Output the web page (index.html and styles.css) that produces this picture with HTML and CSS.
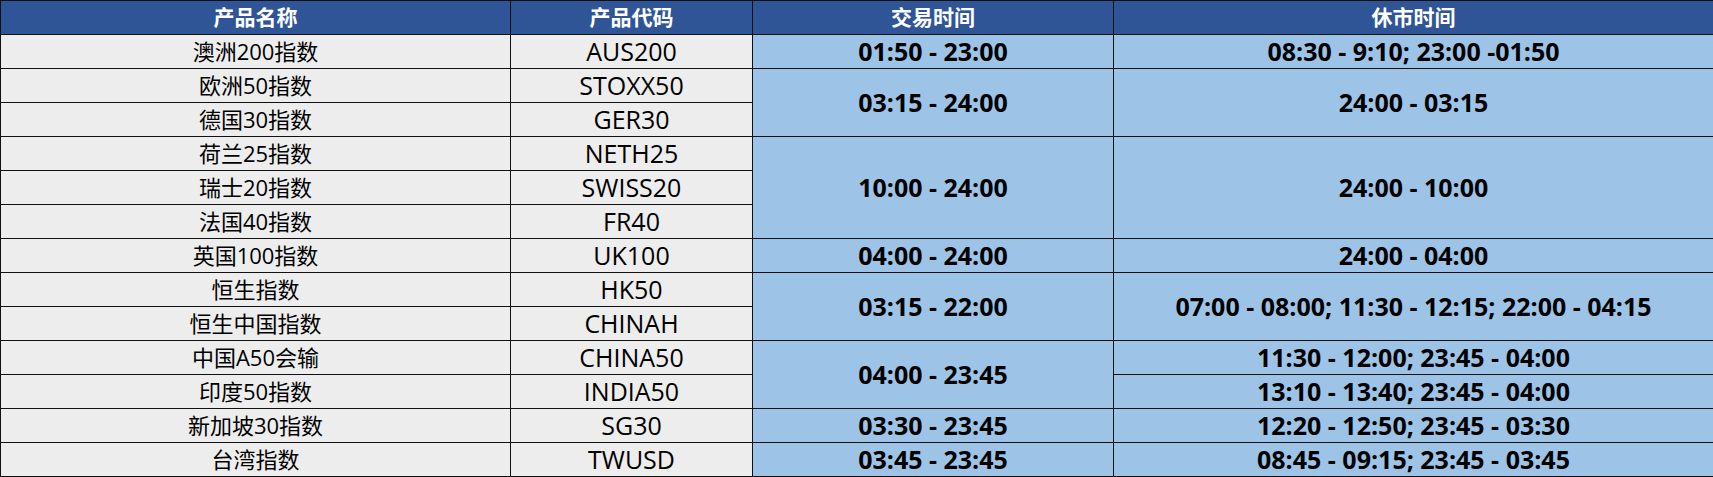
FILE: index.html
```html
<!DOCTYPE html>
<html lang="zh-CN">
<head>
<meta charset="utf-8">
<title>产品交易时间</title>
<link rel="stylesheet" href="styles.css">
</head>
<body>
<table class="sched">
  <colgroup>
    <col class="c-name"><col class="c-code"><col class="c-trade"><col class="c-close">
  </colgroup>
  <thead>
    <tr><th>产品名称</th><th>产品代码</th><th>交易时间</th><th>休市时间</th></tr>
  </thead>
  <tbody>
    <tr><td class="g">澳洲200指数</td><td class="g code">AUS200</td><td class="b">01:50 - 23:00</td><td class="b">08:30 - 9:10; 23:00 -01:50</td></tr>
    <tr><td class="g">欧洲50指数</td><td class="g code">STOXX50</td><td class="b" rowspan="2">03:15 - 24:00</td><td class="b" rowspan="2">24:00 - 03:15</td></tr>
    <tr><td class="g">德国30指数</td><td class="g code">GER30</td></tr>
    <tr><td class="g">荷兰25指数</td><td class="g code">NETH25</td><td class="b" rowspan="3">10:00 - 24:00</td><td class="b" rowspan="3">24:00 - 10:00</td></tr>
    <tr><td class="g">瑞士20指数</td><td class="g code">SWISS20</td></tr>
    <tr><td class="g">法国40指数</td><td class="g code">FR40</td></tr>
    <tr><td class="g">英国100指数</td><td class="g code">UK100</td><td class="b">04:00 - 24:00</td><td class="b">24:00 - 04:00</td></tr>
    <tr><td class="g">恒生指数</td><td class="g code">HK50</td><td class="b" rowspan="2">03:15 - 22:00</td><td class="b" rowspan="2">07:00 - 08:00; 11:30 - 12:15; 22:00 - 04:15</td></tr>
    <tr><td class="g">恒生中国指数</td><td class="g code">CHINAH</td></tr>
    <tr><td class="g">中国A50会输</td><td class="g code">CHINA50</td><td class="b" rowspan="2">04:00 - 23:45</td><td class="b">11:30 - 12:00; 23:45 - 04:00</td></tr>
    <tr><td class="g">印度50指数</td><td class="g code">INDIA50</td><td class="b">13:10 - 13:40; 23:45 - 04:00</td></tr>
    <tr><td class="g">新加坡30指数</td><td class="g code">SG30</td><td class="b">03:30 - 23:45</td><td class="b">12:20 - 12:50; 23:45 - 03:30</td></tr>
    <tr><td class="g">台湾指数</td><td class="g code">TWUSD</td><td class="b">03:45 - 23:45</td><td class="b">08:45 - 09:15; 23:45 - 03:45</td></tr>
  </tbody>
</table>
</body>
</html>
```
FILE: styles.css
```css
html, body {
  margin: 0;
  padding: 0;
  background: #ffffff;
}
.sched {
  border-collapse: collapse;
  table-layout: fixed;
  width: 1713px;
  font-family: "Open Sans", "Noto Sans CJK SC", sans-serif;
  font-size: 21px;
  color: #000;
}
.c-name { width: 510px; }
.c-code { width: 242px; }
.c-trade { width: 361px; }
.c-close { width: 600px; }
.sched th,
.sched td {
  border: 1px solid #111;
  height: 33px;
  padding: 0;
  text-align: center;
  vertical-align: middle;
  line-height: 33px;
  white-space: nowrap;
}
.sched th {
  background: #2f5597;
  color: #fff;
  font-weight: 700;
}
.sched td.g {
  background: #ededed;
  font-weight: 400;
  font-size: 22px;
}
.sched td.code {
  font-size: 25px;
}
.sched td.b {
  background: #9dc3e6;
  font-weight: 700;
  font-size: 25px;
}
```
